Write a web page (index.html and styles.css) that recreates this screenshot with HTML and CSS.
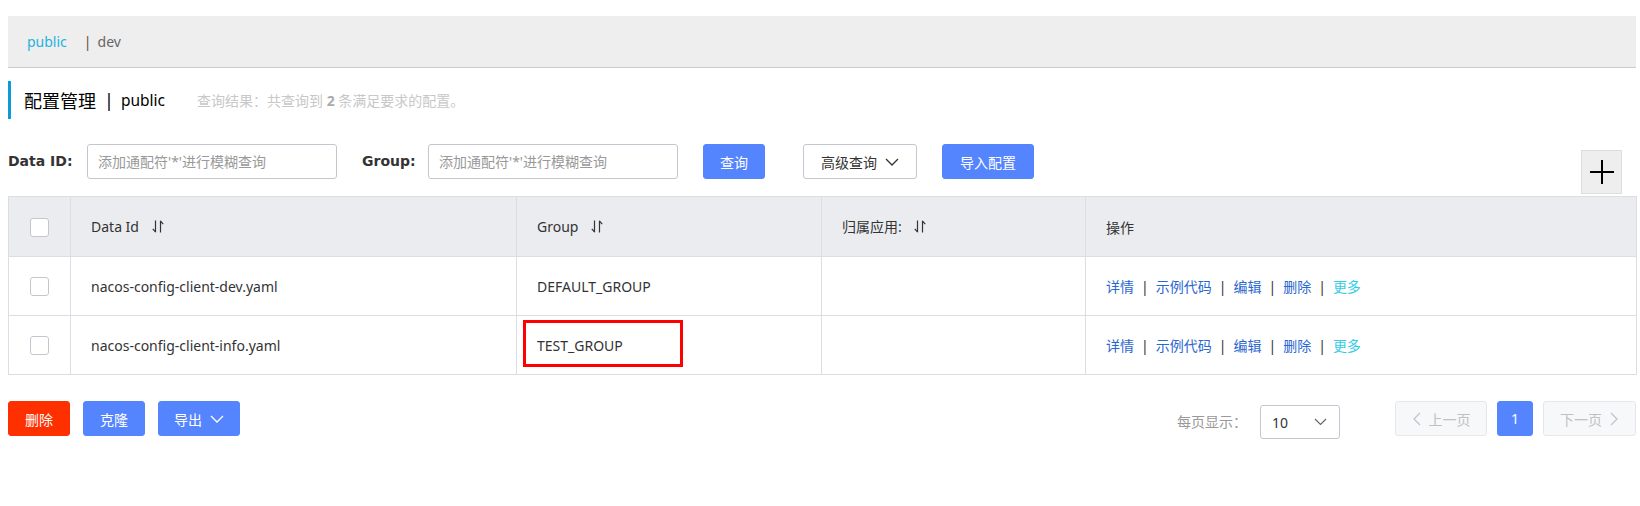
FILE: index.html
```html
<!DOCTYPE html>
<html lang="zh-CN">
<head>
<meta charset="utf-8">
<title>配置管理</title>
<link rel="stylesheet" href="styles.css">
</head>
<body>
<div class="page">
  <div class="ns-bar">
    <span class="ns ns-active">public</span>
    <span class="ns-sep">|</span>
    <span class="ns">dev</span>
  </div>

  <div class="title">
    <span class="t-main">配置管理</span>
    <span class="t-sep">|</span>
    <span class="t-ns">public</span>
    <span class="t-desc">查询结果：共查询到 <b>2</b> 条满足要求的配置。</span>
  </div>

  <div class="search">
    <label class="label label-id">Data ID:</label>
    <input class="input" type="text" placeholder="添加通配符'*'进行模糊查询">
    <label class="label label-group">Group:</label>
    <input class="input" type="text" placeholder="添加通配符'*'进行模糊查询">
    <button class="btn btn-primary btn-query">查询</button>
    <button class="btn btn-normal btn-adv">高级查询
      <svg class="chev" width="14" height="8" viewBox="0 0 14 8"><polyline points="1,1 7,7 13,1" fill="none" stroke="#333" stroke-width="1.3"/></svg>
    </button>
    <button class="btn btn-primary btn-import">导入配置</button>
    <button class="btn-plus" aria-label="add">
      <svg width="26" height="26" viewBox="0 0 26 26"><path d="M13 1V25M1 13H25" stroke="#000" stroke-width="2" fill="none"/></svg>
    </button>
  </div>

  <table class="grid">
    <colgroup>
      <col class="c-check"><col class="c-id"><col class="c-group"><col class="c-app"><col class="c-op">
    </colgroup>
    <thead>
      <tr>
        <th class="cell-check"><span class="checkbox"></span></th>
        <th>Data Id <span class="sort"><svg width="12" height="13" viewBox="0 0 12 13"><path d="M3.5 0.5V12.2M3.6 12.2L0.8 8.8M8.5 12.5V0.8M8.4 0.8L11.2 4.2" stroke="#333" stroke-width="1.2" fill="none"/></svg></span></th>
        <th>Group <span class="sort"><svg width="12" height="13" viewBox="0 0 12 13"><path d="M3.5 0.5V12.2M3.6 12.2L0.8 8.8M8.5 12.5V0.8M8.4 0.8L11.2 4.2" stroke="#333" stroke-width="1.2" fill="none"/></svg></span></th>
        <th>归属应用: <span class="sort"><svg width="12" height="13" viewBox="0 0 12 13"><path d="M3.5 0.5V12.2M3.6 12.2L0.8 8.8M8.5 12.5V0.8M8.4 0.8L11.2 4.2" stroke="#333" stroke-width="1.2" fill="none"/></svg></span></th>
        <th>操作</th>
      </tr>
    </thead>
    <tbody>
      <tr>
        <td class="cell-check"><span class="checkbox"></span></td>
        <td>nacos-config-client-dev.yaml</td>
        <td>DEFAULT_GROUP</td>
        <td></td>
        <td class="ops"><a>详情</a><span class="op-sep">|</span><a>示例代码</a><span class="op-sep">|</span><a>编辑</a><span class="op-sep">|</span><a>删除</a><span class="op-sep">|</span><a class="more">更多</a></td>
      </tr>
      <tr>
        <td class="cell-check"><span class="checkbox"></span></td>
        <td>nacos-config-client-info.yaml</td>
        <td class="marked">TEST_GROUP<span class="mark-box"></span></td>
        <td></td>
        <td class="ops"><a>详情</a><span class="op-sep">|</span><a>示例代码</a><span class="op-sep">|</span><a>编辑</a><span class="op-sep">|</span><a>删除</a><span class="op-sep">|</span><a class="more">更多</a></td>
      </tr>
    </tbody>
  </table>

  <div class="footer">
    <button class="btn btn-danger btn-del">删除</button>
    <button class="btn btn-primary btn-clone">克隆</button>
    <button class="btn btn-primary btn-export">导出
      <svg class="chev" width="14" height="8" viewBox="0 0 14 8"><polyline points="1,1 7,7 13,1" fill="none" stroke="#fff" stroke-width="1.3"/></svg>
    </button>

    <div class="pager">
      <span class="pager-label">每页显示：</span>
      <div class="select">
        <span>10</span>
        <svg width="13" height="8" viewBox="0 0 13 8"><polyline points="1,1 6.5,6.5 12,1" fill="none" stroke="#666" stroke-width="1.2"/></svg>
      </div>
      <button class="pbtn pbtn-disabled pbtn-prev">
        <svg width="9" height="14" viewBox="0 0 9 14"><polyline points="8,1 2,7 8,13" fill="none" stroke="#c4c6cf" stroke-width="1.4"/></svg>
        上一页
      </button>
      <button class="pbtn pbtn-current">1</button>
      <button class="pbtn pbtn-disabled pbtn-next">
        下一页
        <svg width="9" height="14" viewBox="0 0 9 14"><polyline points="1,1 7,7 1,13" fill="none" stroke="#c4c6cf" stroke-width="1.4"/></svg>
      </button>
    </div>
  </div>
</div>
</body>
</html>
```

FILE: styles.css
```css
* {
  box-sizing: border-box;
}

body {
  margin: 0;
  background: #fff;
  font-family: "Noto Sans", "Noto Sans CJK SC", sans-serif;
  font-size: 14px;
  color: #333;
}

.page {
  padding: 16px 4px 0 8px;
}

/* namespace bar */
.ns-bar {
  height: 52px;
  background: #eee;
  border-bottom: 1px solid #ccc;
  display: flex;
  align-items: center;
  padding-left: 19px;
  font-size: 14px;
}

.ns {
  color: #666;
}

.ns-active {
  color: #1fb3dd;
}

.ns-sep {
  color: #6b4a3a;
  margin: 0 6px 0 17px;
}

/* title */
.title {
  margin-top: 13px;
  height: 38px;
  border-left: 3px solid #0b9bd6;
  display: flex;
  align-items: center;
  padding-left: 13px;
}

.t-main {
  font-size: 18px;
  color: #000;
}

.t-ns {
  font-size: 15.5px;
  color: #000;
}

.t-sep {
  font-size: 18px;
  color: #000;
  margin: 0 7px 0 8px;
}

.t-desc {
  margin-left: 32px;
  font-size: 14px;
  color: #c8c8c8;
}

.t-desc b {
  color: #aaa;
}

/* search row */
.search {
  margin-top: 25px;
  height: 52px;
  display: flex;
  align-items: flex-start;
}

.label {
  font-family: "DejaVu Sans", sans-serif;
  font-weight: bold;
  font-size: 14px;
  line-height: 35px;
  color: #333;
  white-space: nowrap;
  margin-right: 15px;
}

.label-id {
  width: 64px;
}

.label-group {
  width: 51px;
  margin-left: 25px;
}

.input {
  width: 250px;
  height: 35px;
  border: 1px solid #c4c6cf;
  border-radius: 3px;
  padding: 0 10px;
  font-family: "Noto Sans", "Noto Sans CJK SC", sans-serif;
  font-size: 14px;
  color: #333;
  outline: none;
}

.input::placeholder {
  color: #999;
}

.btn {
  height: 35px;
  border-radius: 3px;
  font-family: "Noto Sans", "Noto Sans CJK SC", sans-serif;
  font-size: 14px;
  display: inline-flex;
  align-items: center;
  justify-content: center;
  gap: 8px;
  padding: 0;
  cursor: pointer;
}

.btn-primary {
  background: #5584ff;
  border: 1px solid #5584ff;
  color: #fff;
}

.btn-danger {
  background: #ff3000;
  border: 1px solid #ff3000;
  color: #fff;
}

.btn-normal {
  background: #fff;
  border: 1px solid #c4c6cf;
  color: #333;
}

.btn-query {
  width: 62px;
  margin-left: 25px;
}

.btn-adv {
  width: 114px;
  margin-left: 38px;
}

.btn-import {
  width: 92px;
  margin-left: 25px;
}

.btn-plus {
  margin-left: auto;
  margin-right: 14px;
  margin-top: 6px;
  width: 41px;
  height: 44px;
  background: #eee;
  border: 1px solid #ddd;
  display: flex;
  align-items: center;
  justify-content: center;
  padding: 0;
}

/* table */
.grid {
  width: 1628px;
  border-collapse: collapse;
  table-layout: fixed;
  border: 1px solid #dcdee3;
}

.c-check { width: 62px; }
.c-id { width: 446px; }
.c-group { width: 305px; }
.c-app { width: 264px; }
.c-op { width: 551px; }

.grid th,
.grid td {
  border: 1px solid #dcdee3;
  padding: 0 20px;
  text-align: left;
  font-weight: normal;
  color: #333;
  font-size: 14px;
  white-space: nowrap;
}

.grid thead tr {
  height: 60px;
  background: #ebecf0;
}

.grid tbody tr {
  height: 59px;
}

.cell-check {
  text-align: center !important;
  padding: 0 !important;
}

.checkbox {
  display: inline-block;
  width: 19px;
  height: 19px;
  border: 1px solid #c4c6cf;
  border-radius: 3px;
  background: #fff;
  vertical-align: middle;
}

.sort {
  display: inline-block;
  margin-left: 9px;
  vertical-align: -1px;
}

.ops a {
  color: #2a67d0;
}

.ops a.more {
  color: #33cde5;
}

.op-sep {
  color: #333;
  margin: 0 7px;
}

.marked {
  position: relative;
}

.mark-box {
  position: absolute;
  left: 6px;
  top: 4px;
  width: 160px;
  height: 47px;
  border: 3px solid #f00;
}

/* footer */
.footer {
  margin-top: 26px;
  display: flex;
  align-items: flex-start;
}

.btn-del,
.btn-clone {
  width: 62px;
}

.btn-clone {
  margin-left: 13px;
}

.btn-export {
  width: 82px;
  margin-left: 13px;
}

.pager {
  margin-left: auto;
  display: flex;
  align-items: flex-start;
}

.pager-label {
  line-height: 34px;
  margin-top: 4px;
  color: #999;
}

.select {
  margin-left: 13px;
  margin-top: 4px;
  width: 80px;
  height: 34px;
  border: 1px solid #c4c6cf;
  border-radius: 3px;
  display: flex;
  align-items: center;
  justify-content: space-between;
  padding: 0 12px 0 11px;
  color: #333;
}

.pbtn {
  height: 35px;
  border-radius: 3px;
  font-family: "Noto Sans", "Noto Sans CJK SC", sans-serif;
  font-size: 14px;
  display: inline-flex;
  align-items: center;
  justify-content: center;
  gap: 8px;
  padding: 0;
}

.pbtn-disabled {
  background: #f7f8fa;
  border: 1px solid #e6e7eb;
  color: #c1c1c1;
}

.pbtn-prev {
  width: 92px;
  margin-left: 55px;
}

.pbtn-current {
  width: 36px;
  margin-left: 10px;
  background: #5584ff;
  border: 1px solid #5584ff;
  color: #fff;
}

.pbtn-next {
  width: 93px;
  margin-left: 10px;
}
```
